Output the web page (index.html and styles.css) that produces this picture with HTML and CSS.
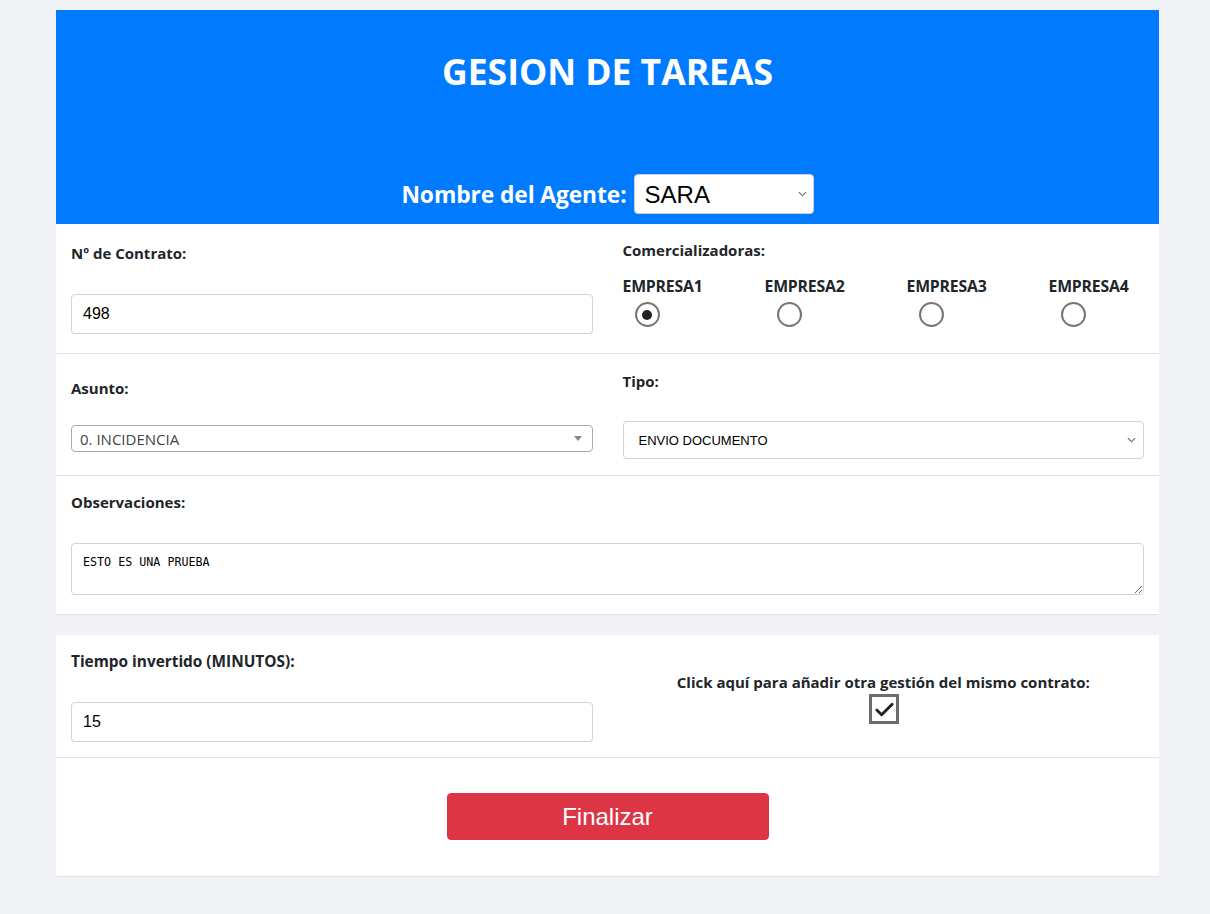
FILE: index.html
```html
<!DOCTYPE html>
<html lang="es">
<head>
<meta charset="utf-8">
<title>Gestion de tareas</title>
<link rel="stylesheet" href="styles.css">
</head>
<body>
<div class="page">
  <header class="header">
    <h1 class="title">GESION DE TAREAS</h1>
    <div class="agent">
      <label class="agent-label" for="agente">Nombre del Agente:</label>
      <select id="agente" class="agent-select"><option>SARA</option></select>
    </div>
  </header>

  <section class="row sec1">
    <div class="col">
      <label class="lbl lbl-contrato">Nº de Contrato:</label>
      <input class="input in-contrato" type="text" value="498">
    </div>
    <div class="col">
      <label class="lbl lbl-com">Comercializadoras:</label>
      <div class="radios">
        <label class="radio-item"><span class="radio-text">EMPRESA1</span><span class="radio checked"></span></label>
        <label class="radio-item"><span class="radio-text">EMPRESA2</span><span class="radio"></span></label>
        <label class="radio-item"><span class="radio-text">EMPRESA3</span><span class="radio"></span></label>
        <label class="radio-item"><span class="radio-text">EMPRESA4</span><span class="radio"></span></label>
      </div>
    </div>
  </section>

  <section class="row sec2">
    <div class="col col-asunto">
      <label class="lbl">Asunto:</label>
      <div class="select2">
        <span class="select2-text">0. INCIDENCIA</span>
        <span class="select2-arrow"></span>
      </div>
    </div>
    <div class="col col-tipo">
      <label class="lbl">Tipo:</label>
      <select class="tipo-select"><option>ENVIO DOCUMENTO</option></select>
    </div>
  </section>

  <section class="sec3">
    <label class="lbl">Observaciones:</label>
    <textarea class="obs">ESTO ES UNA PRUEBA</textarea>
  </section>

  <section class="row sec4">
    <div class="col col-tiempo">
      <label class="lbl lbl-tiempo">Tiempo invertido (MINUTOS):</label>
      <input class="input in-tiempo" type="text" value="15">
    </div>
    <div class="col col-check">
      <label class="lbl check-lbl">Click aquí para añadir otra gestión del mismo contrato:</label>
      <span class="checkbox">
        <svg viewBox="0 0 24 24" width="23" height="23"><path d="M4 12.5l5 5L20 6.5" fill="none" stroke="#222" stroke-width="3" stroke-linecap="round" stroke-linejoin="round"/></svg>
      </span>
    </div>
  </section>

  <section class="sec5">
    <button class="btn-finalizar" type="button">Finalizar</button>
  </section>
</div>
</body>
</html>
```

FILE: styles.css
```css
* { box-sizing: border-box; }

html, body {
  margin: 0;
  padding: 0;
}

body {
  background: #f0f1f5;
  font-family: "Open Sans", "Noto Sans", sans-serif;
  color: #212529;
}

.page {
  width: 1103px;
  margin: 10px 0 0 56px;
}

.sec1, .sec2, .sec3, .sec4, .sec5 { background: #fff; }

.header {
  background: #007bff;
  height: 214px;
  padding-top: 40px;
  display: flex;
  flex-direction: column;
  align-items: center;
}

.title {
  margin: 0;
  color: #fff;
  font-size: 35.5px;
  font-weight: 700;
  line-height: 43px;
}

.agent {
  margin-top: 81px;
  display: flex;
  align-items: center;
  gap: 7px;
}

.agent-label {
  color: #fff;
  font-weight: 700;
  font-size: 22.8px;
  letter-spacing: -0.1px;
}

.agent-select,
.tipo-select {
  -webkit-appearance: none;
  appearance: none;
  background-color: #fff;
  background-image: url("data:image/svg+xml,%3Csvg xmlns='http://www.w3.org/2000/svg' width='10' height='6' viewBox='0 0 10 6'%3E%3Cpath d='M1 1l4 4 4-4' fill='none' stroke='%23666' stroke-width='1.2'/%3E%3C/svg%3E");
  background-repeat: no-repeat;
  border: 1px solid #ced4da;
  border-radius: 4px;
  font-family: "Liberation Sans", Arial, sans-serif;
  color: #000;
}

.agent-select {
  width: 180px;
  height: 40px;
  font-size: 24px;
  padding: 0 10px;
  background-position: right 6px center;
  background-size: 9px 6px;
}

.row {
  display: flex;
  border-bottom: 1px solid #dee2e6;
}

.col {
  width: 50%;
  padding: 0 15px;
  display: flex;
  flex-direction: column;
  align-items: flex-start;
}

.lbl {
  display: block;
  font-weight: 700;
  font-size: 15px;
  line-height: 22px;
}

.lbl-tiempo { font-size: 15.4px; }

.input {
  width: 100%;
  height: 40px;
  border: 1px solid #ced4da;
  border-radius: 4px;
  padding: 0 11px;
  font-family: "Liberation Sans", Arial, sans-serif;
  font-size: 16px;
  color: #000;
}

/* section 1 */
.sec1 { height: 130px; }
.sec1 .col:first-child { padding-top: 18px; }
.sec1 .col:last-child { padding-top: 15px; }
.in-contrato { margin-top: 30px; }

.radios {
  display: flex;
  margin-top: 14px;
}

.radio-item {
  width: 142px;
  flex-shrink: 0;
  display: flex;
  flex-direction: column;
  align-items: flex-start;
}

.radio-text {
  font-weight: 700;
  font-size: 15.8px;
  line-height: 22px;
  letter-spacing: -0.2px;
}

.radio {
  width: 25px;
  height: 25px;
  margin: 5px 0 0 12px;
  border: 2px solid #767676;
  border-radius: 50%;
  display: flex;
  align-items: center;
  justify-content: center;
  background: #fff;
}

.radio.checked::after {
  content: "";
  width: 10px;
  height: 10px;
  border-radius: 50%;
  background: #222;
}

/* section 2 */
.sec2 { height: 122px; }
.col-asunto { padding-top: 23px; }
.col-tipo { padding-top: 16px; }

.select2 {
  margin-top: 26px;
  width: 100%;
  height: 27px;
  border: 1px solid #aaa;
  border-radius: 4px;
  display: flex;
  align-items: center;
  justify-content: space-between;
  padding: 0 8px;
}

.select2-text {
  color: #444;
  font-size: 15px;
}

.select2-arrow {
  width: 0;
  height: 0;
  border-left: 4px solid transparent;
  border-right: 4px solid transparent;
  border-top: 5px solid #888;
  margin-right: 2px;
}

.tipo-select {
  margin-top: 29px;
  width: 100%;
  height: 38px;
  font-size: 13px;
  padding: 0 15px;
  background-position: right 7px center;
  background-size: 9px 6px;
}

/* section 3 */
.sec3 {
  height: 139px;
  padding: 15px 15px 0;
  border-bottom: 1px solid #dee2e6;
}

.obs {
  display: block;
  margin-top: 30px;
  width: 100%;
  height: 52px;
  border: 1px solid #ced4da;
  border-radius: 4px;
  padding: 11px 11px;
  font-family: "DejaVu Sans Mono", "Liberation Mono", monospace;
  font-size: 11.7px;
  color: #000;
  resize: vertical;
}

/* section 4 */
.sec4 {
  margin-top: 20px;
  height: 123px;
}

.col-tiempo { padding-top: 16px; }
.in-tiempo { margin-top: 29px; }

.col-check {
  padding-top: 36px;
  align-items: center;
}

.check-lbl { text-align: center; }

.checkbox {
  margin: 1px 0 0 2px;
  width: 30px;
  height: 30px;
  border: 3px solid #6d6d6d;
  background: #fff;
  display: flex;
  align-items: center;
  justify-content: center;
}

/* section 5 */
.sec5 {
  height: 119px;
  padding-top: 35px;
  border-bottom: 1px solid #dee2e6;
  display: flex;
  justify-content: center;
}

.btn-finalizar {
  width: 322px;
  height: 47px;
  background: #dc3545;
  border: 1px solid #dc3545;
  border-radius: 4px;
  color: #fff;
  font-family: "Liberation Sans", Arial, sans-serif;
  font-size: 24px;
  cursor: pointer;
}
```
